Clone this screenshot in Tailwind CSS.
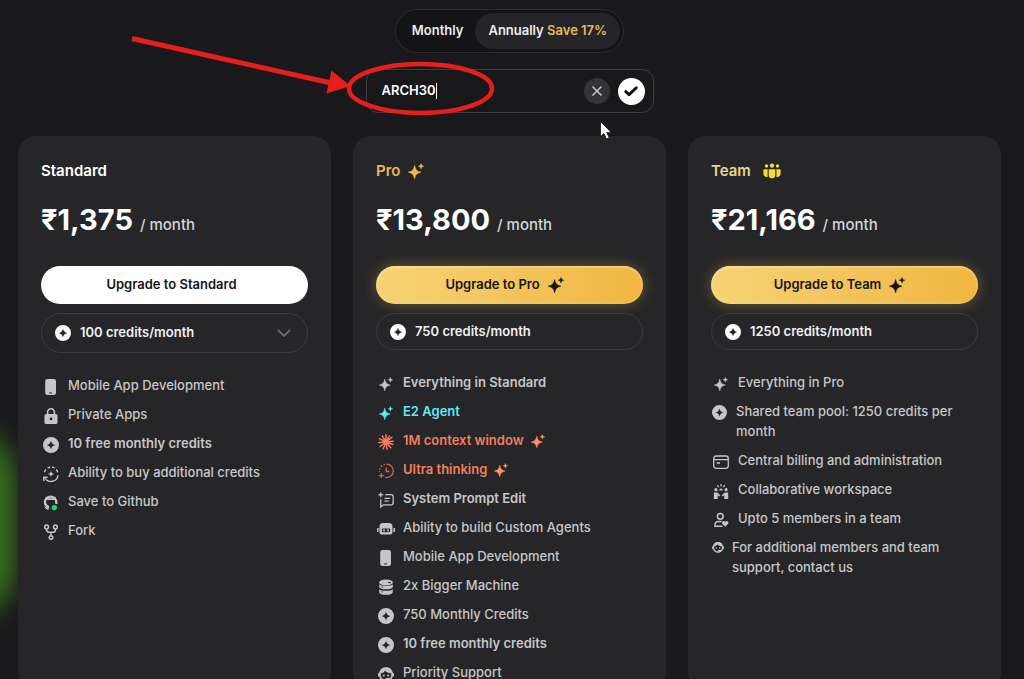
<!DOCTYPE html>
<html lang="en">
<head>
<meta charset="utf-8">
<meta name="viewport" content="width=device-width, initial-scale=1">
<title>Pricing</title>
<script src="https://cdn.jsdelivr.net/npm/@tailwindcss/browser@4"></script>
</head>
<body class="relative min-h-screen overflow-x-hidden bg-[#19191b] font-['Inter',sans-serif] text-white">

<svg class="hidden" aria-hidden="true">
  <symbol id="sparkle" viewBox="0 0 16 16"><path fill="currentColor" stroke="currentColor" stroke-width=".7" stroke-linejoin="round" d="M6.600 2.600C7.600 7 8.600 8.100 12.800 9.200 8.600 10.300 7.600 11.400 6.600 15.600 5.600 11.400 4.600 10.300.4 9.200 4.600 8.100 5.600 7 6.600 2.600Z"/><path fill="currentColor" stroke="currentColor" stroke-width=".5" stroke-linejoin="round" d="M13 .5c.5 1.800.9 2.200 2.700 2.700-1.800.5-2.200.9-2.700 2.700-.5-1.800-.9-2.200-2.700-2.700C12.100 2.700 12.500 2.300 13 .5Z"/></symbol>
  <symbol id="coin" viewBox="0 0 16 16"><path fill="currentColor" fill-rule="evenodd" d="M8 0a8 8 0 1 1 0 16A8 8 0 0 1 8 0Zm0 3.700C7.200 6.400 6.400 7.200 3.700 8 6.400 8.800 7.200 9.600 8 12.300 8.800 9.600 9.600 8.800 12.300 8 9.600 7.200 8.800 6.400 8 3.700Z"/></symbol>
  <symbol id="phone" viewBox="0 0 16 16"><path fill="currentColor" fill-rule="evenodd" d="M4.500 0h6.200a2.300 2.300 0 0 1 2.300 2.300v11.400a2.300 2.300 0 0 1-2.300 2.300H4.500a2.300 2.300 0 0 1-2.300-2.300V2.300A2.300 2.300 0 0 1 4.500 0Zm1.600 13.400v1h3v-1Z"/></symbol>
  <symbol id="lock" viewBox="0 0 16 16"><path fill="none" stroke="currentColor" stroke-width="1.600" d="M4.600 6.500V4.200a3.400 3.400 0 0 1 6.800 0v2.300"/><path fill="currentColor" fill-rule="evenodd" d="M3 6h10a1.500 1.500 0 0 1 1.500 1.500v7A1.500 1.500 0 0 1 13 16H3a1.500 1.500 0 0 1-1.500-1.500v-7A1.500 1.500 0 0 1 3 6Zm5 3.500a1.400 1.400 0 1 0 0 2.800 1.400 1.400 0 0 0 0-2.800Z"/></symbol>
  <symbol id="refill" viewBox="0 0 16 16"><g fill="none" stroke="currentColor" stroke-width="1.400"><path d="M1.400 6.200a7 7 0 0 1 1.500-2.700M4.600 2a7 7 0 0 1 2.500-.8M9 1.100a7 7 0 0 1 2.700.9M13.200 3.500a7 7 0 0 1 1.500 2.700"/><path d="M15 9.200A7 7 0 0 1 2 12"/><path d="M.8 15v-3.800h3.800"/></g><path fill="currentColor" d="M8 4.800c.5 2.200 1 2.700 3.200 3.200C9 8.500 8.500 9 8 11.200 7.500 9 7 8.500 4.800 8 7 7.500 7.500 7 8 4.800Z"/></symbol>
  <symbol id="github" viewBox="0 0 16 16"><path fill="none" stroke="currentColor" stroke-width="2.200" d="M5 13.600V11.800C3.200 11 1.900 9.300 1.900 7.300a5.700 5.700 0 0 1 11.400 0V9"/><path fill="currentColor" d="M3 1.600 5.600 3.200h4L12.200 1.600 13.400 5H1.800ZM1 10.500l1.500 1.600 2.500.600 1 2.300-2.500-.8A7 7 0 0 1 1 10.500Z"/><circle cx="11.300" cy="12.700" r="2.700" fill="#27d565"/></symbol>
  <symbol id="fork" viewBox="0 0 16 16"><g fill="none" stroke="currentColor" stroke-width="1.500"><circle cx="3.600" cy="3" r="1.900"/><circle cx="12.400" cy="3" r="1.900"/><circle cx="8" cy="13.500" r="1.800"/><path d="M3.600 5v1a2.200 2.200 0 0 0 2.200 2.200h4.400A2.200 2.200 0 0 0 12.400 6V5M8 8.200v3.400"/></g></symbol>
  <symbol id="burst" viewBox="0 0 16 16"><path stroke="currentColor" stroke-width="1.500" stroke-linecap="round" d="M8 8V.8M8 8l3.300-6M8 8l6-4.800M8 8l7.200-.7M8 8l6.800 2.500M8 8l4.700 5.700M8 8l1 7.200M8 8l-2.800 6.800M8 8l-6 4.500M8 8l-7.200.6M8 8 1.500 4.700M8 8 4.300 1.800"/></symbol>
  <symbol id="clock" viewBox="0 0 16 16"><g fill="none" stroke="currentColor" stroke-width="1.300"><path d="M8.600 1.200a6.700 6.700 0 0 1 0 13.400"/><path stroke-dasharray="1.500 1.600" d="M7 1.400A6.800 6.800 0 0 0 1.500 9"/><path d="M8.300 4.500v4h3.200M3.300 10v5.200M.7 12.600h5.200M7.200 14.400h2"/></g></symbol>
  <symbol id="prompt" viewBox="0 0 16 16"><path fill="currentColor" stroke="currentColor" stroke-width=".5" d="M2.800.2c.4 1.900.8 2.200 2.600 2.600-1.800.4-2.200.8-2.600 2.600C2.400 3.600 2 3.200.2 2.800 2 2.400 2.400 2.100 2.800.2Z"/><path fill="none" stroke="currentColor" stroke-width="1.300" d="M7.200 2.700h6a2 2 0 0 1 2 2v6.100a2 2 0 0 1-2 2H5.500l-2.700 2.200V7.200M6.500 6.400h5.600M6.500 9.200h4"/></symbol>
  <symbol id="robot" viewBox="0 0 18 16"><path fill="currentColor" fill-rule="evenodd" d="M6 2h6a3.500 3.500 0 0 1 3.500 3.500V11a2.500 2.500 0 0 1-2.500 2.500H5A2.500 2.500 0 0 1 2.500 11V5.500A3.500 3.500 0 0 1 6 2Zm0 5.500a1.200 1.200 0 0 0-1.200 1.200v1.400A1.200 1.200 0 0 0 6 11.300h6a1.200 1.200 0 0 0 1.200-1.200V8.700A1.200 1.200 0 0 0 12 7.500Z"/><path stroke="currentColor" stroke-width="1.500" d="M.8 7v4M17.200 7v4M7 8.300v2.200M11 8.300v2.200"/></symbol>
  <symbol id="stack" viewBox="0 0 16 16"><ellipse cx="8" cy="3.400" rx="6.800" ry="3" fill="currentColor"/><path fill="currentColor" d="M1.200 5.300c1.300 2.200 12.300 2.200 13.600 0v2.400c0 3.500-13.600 3.500-13.600 0Z"/><path fill="currentColor" d="M1.200 10.200c1.300 2.200 12.300 2.200 13.600 0v2.700c0 3.800-13.600 3.800-13.600 0Z"/><path stroke="#262628" stroke-width="1" d="M10 3.600h3M3.500 8.200h1.300M3.500 12.900h1.300"/></symbol>
  <symbol id="support" viewBox="0 0 16 16"><path fill="none" stroke="currentColor" stroke-width="1.600" d="M2 7a6.100 6.100 0 0 1 12 0M13.800 10.600c-.8 2.500-2.900 4.100-5.800 4.100s-5-1.600-5.800-4.100"/><path fill="currentColor" d="M2.800 6.500h-1A1.800 1.800 0 0 0 0 8.300v.9A1.800 1.800 0 0 0 1.800 11h1Zm10.400 0h1A1.800 1.800 0 0 1 16 8.300v.9a1.800 1.800 0 0 1-1.800 1.800h-1ZM2.500 7.200C5 7.100 6.300 6 7 4.400c1.400 1.800 3.500 2.700 6.500 2.800C14 3.500 11.300 1.800 8 1.800S2.300 3.500 2.500 7.200Z"/><circle cx="5.800" cy="9.400" r="1" fill="currentColor"/><circle cx="10.200" cy="9.400" r="1" fill="currentColor"/><path stroke="currentColor" stroke-width="1.700" stroke-linecap="round" d="M8.500 12.800h3.600"/></symbol>
  <symbol id="card" viewBox="0 0 16 16"><rect x=".7" y="2" width="14.600" height="12.300" rx="2.500" fill="none" stroke="currentColor" stroke-width="1.300"/><path stroke="currentColor" stroke-width="1.300" d="M1 5.600h14M3.700 9h3.400"/></symbol>
  <symbol id="collab" viewBox="0 0 16 16"><g fill="currentColor"><circle cx="2.900" cy="6.700" r="1.600"/><circle cx="13.100" cy="6.700" r="1.600"/><path d="M.8 9.500h3.500l3 2.800-1.100 1.200-1.500-1.300V16H.8ZM15.200 9.500h-3.500l-3 2.800 1.100 1.200 1.500-1.300V16h3.900Z"/></g><path fill="none" stroke="currentColor" stroke-width="1.200" d="M8 1v2.500M4.200 2.200l1.500 2M11.800 2.200l-1.500 2M6.500 7.500 8 6l1.500 1.500"/></symbol>
  <symbol id="member" viewBox="0 0 16 16"><g fill="none" stroke="currentColor" stroke-width="1.500"><circle cx="7.300" cy="4.300" r="2.900"/><path d="M8.500 9.600H6c-2.500 0-4 1.300-4 3.100v1.500h7.500"/></g><path fill="currentColor" d="M12.200 14.800 9.400 12c-1.500-1.900.9-4 2.800-2.200 1.900-1.800 4.300.3 2.800 2.200Z"/></symbol>
  <symbol id="people" viewBox="0 0 18 16"><g fill="currentColor"><circle cx="9" cy="2.600" r="2.200"/><circle cx="3.500" cy="3" r="1.700"/><circle cx="14.500" cy="3" r="1.700"/><path d="M5.700 6.300h6.600v5.800a3.300 3.300 0 0 1-6.600 0ZM.4 7.300a1 1 0 0 1 1-1h3.200v7.800C2 14.300.4 12.800.4 10.600ZM17.600 7.300a1 1 0 0 0-1-1h-3.200v7.800c2.600.2 4.200-1.300 4.200-3.500Z"/></g></symbol>
</svg>

<!-- background glow -->
<div class="absolute top-[424px] -left-[104px] h-[200px] w-[120px] rounded-full bg-[#356f1c] blur-[12px]" aria-hidden="true"></div>

<main class="relative pt-[9px] pr-[23px] pl-[18px]">
  <div class="mx-auto flex h-11 w-fit items-center rounded-full border border-[#2c2c2f] bg-[#141416] py-1 pr-[3px] pl-4 text-[13px] font-semibold text-[#ececee]" role="group" aria-label="Billing period">
    <button type="button" class="pr-3">Monthly</button>
    <button type="button" aria-pressed="true" class="h-9 rounded-full bg-[#252529] px-[13px] whitespace-nowrap">Annually <span class="text-[#e9b954]">Save 17%</span></button>
  </div>

  <form class="relative mx-auto mt-4 flex h-11 w-72 items-center rounded-xl border border-[#3e3e41] bg-[#18181a] pr-2 pl-[15px]" onsubmit="return false">
    <input type="text" value="ARCH30" aria-label="Promo code" class="field-sizing-content bg-transparent text-[13px] font-semibold text-white outline-none">
    <span class="h-4 w-px bg-white" aria-hidden="true"></span>
    <button type="button" aria-label="Clear code" class="ml-auto flex size-[26px] items-center justify-center rounded-full bg-[#343436] text-[#c4c4c6]">
      <svg class="size-3" viewBox="0 0 12 12" fill="none" stroke="currentColor" stroke-width="1.500"><path d="m1.500 1.500 9 9M10.500 1.500l-9 9"/></svg>
    </button>
    <button type="submit" aria-label="Apply code" class="ml-2 flex size-[27px] items-center justify-center rounded-full bg-white text-[#111]">
      <svg class="size-4" viewBox="0 0 16 16" fill="none" stroke="currentColor" stroke-width="2.900" stroke-linecap="round" stroke-linejoin="round"><path d="m2.800 8.600 3.300 3 7.200-6.800"/></svg>
    </button>
    <!-- callout arrow, ring and pointer -->
    <svg class="pointer-events-none absolute -top-10 -left-[237px] z-10 h-[112px] w-[490px]" viewBox="0 0 490 112" aria-hidden="true">
      <path d="m2 8.500 199 44.500" stroke="#e61e1e" stroke-width="5"/>
      <path d="m201.500 40.500 19 15.500-24 7.500Z" fill="#e61e1e"/>
      <ellipse cx="290.500" cy="58.500" rx="71.500" ry="24.500" fill="none" stroke="#e61e1e" stroke-width="4.500"/>
      <path d="M470.500 91.500v15l3.400-3 2.600 5.500 2.700-1.300-2.500-5.300h4.500Z" fill="#fff" stroke="#111" stroke-width=".8"/>
    </svg>
  </form>

  <div class="mt-[23px] grid grid-cols-3 gap-[22px]">
    <section class="rounded-[18px] bg-[#262628] px-[23px] pt-[23px] pb-2">
      <h2 class="flex h-6 items-center text-[15px] font-semibold">Standard</h2>
      <p class="mt-[19px] flex h-9 items-baseline gap-[7px] text-[29px] leading-9 font-bold">₹1,375 <span class="text-[15px] font-medium text-[#d5d5d8]">/ month</span></p>
      <button type="button" class="mt-7 flex h-[38px] w-full items-center justify-center rounded-full bg-white pr-1.5 text-[13px] font-semibold text-[#161616]">Upgrade to Standard</button>
      <div class="mt-[9px] flex h-10 items-center rounded-full border border-[#3b3b3d] pr-4 pl-[13px]">
        <svg class="size-4 shrink-0"><use href="#coin"/></svg>
        <select aria-label="Monthly credits" class="min-w-0 flex-1 appearance-none bg-transparent pl-[9px] text-[13px] font-semibold text-[#f0f0f2] outline-none"><option>100 credits/month</option></select>
        <svg class="h-2 w-3.5 shrink-0" viewBox="0 0 14 8" fill="none" stroke="#77777a" stroke-width="1.600"><path d="m.8 .8 6.200 6.200L13.200.8"/></svg>
      </div>
      <ul class="mt-[22px] flex flex-col gap-[9px] pl-0.5 text-[13px] leading-5 font-medium text-[#c6c6c9]">
        <li class="flex gap-[9px]"><svg class="mt-1 size-4 shrink-0"><use href="#phone"/></svg>Mobile App Development</li>
        <li class="flex gap-[9px]"><svg class="mt-1 size-4 shrink-0"><use href="#lock"/></svg>Private Apps</li>
        <li class="flex gap-[9px] font-semibold"><svg class="mt-1 size-4 shrink-0"><use href="#coin"/></svg>10 free monthly credits</li>
        <li class="flex gap-[9px]"><svg class="mt-1 size-4 shrink-0"><use href="#refill"/></svg>Ability to buy additional credits</li>
        <li class="flex gap-[9px]"><svg class="mt-1 size-4 shrink-0"><use href="#github"/></svg>Save to Github</li>
        <li class="flex gap-[9px]"><svg class="mt-1 size-4 shrink-0"><use href="#fork"/></svg>Fork</li>
      </ul>
    </section>

    <section class="rounded-[18px] bg-[#262628] px-[23px] pt-[23px] pb-2">
      <h2 class="flex h-6 items-center gap-2 text-[15px] font-semibold text-[#e9b954]">Pro <svg class="size-4"><use href="#sparkle"/></svg></h2>
      <p class="mt-[19px] flex h-9 items-baseline gap-[7px] text-[29px] leading-9 font-bold">₹13,800 <span class="text-[15px] font-medium text-[#d5d5d8]">/ month</span></p>
      <button type="button" class="mt-7 flex h-[38px] w-full items-center justify-center gap-2 rounded-full bg-linear-to-r from-[#f6d374] to-[#f0b640] pr-2.5 text-[13px] font-semibold text-[#161616] shadow-[0_0_14px_rgba(240,190,70,0.35),inset_0_1px_3px_rgba(255,240,190,0.7)]">Upgrade to Pro <svg class="size-4"><use href="#sparkle"/></svg></button>
      <div class="mt-[9px] flex h-[37px] items-center gap-[9px] rounded-full border border-[#3b3b3d] pl-[13px] text-[13px] font-semibold text-[#f0f0f2]"><svg class="size-4 text-white"><use href="#coin"/></svg>750 credits/month</div>
      <ul class="mt-[22px] flex flex-col gap-[9px] pl-0.5 text-[13px] leading-5 font-medium text-[#c6c6c9]">
        <li class="flex gap-[9px] font-semibold"><svg class="mt-1 size-4 shrink-0 p-px"><use href="#sparkle"/></svg>Everything in Standard</li>
        <li class="flex gap-[9px] font-semibold text-[#5eeaf0]"><svg class="mt-1 size-4 shrink-0 p-px"><use href="#sparkle"/></svg>E2 Agent</li>
        <li class="flex gap-[9px] font-semibold text-[#f47d5d]"><svg class="mt-1 size-4 shrink-0"><use href="#burst"/></svg>1M context window <svg class="-ml-0.5 mt-1 size-3.5 text-[#ff9463]"><use href="#sparkle"/></svg></li>
        <li class="flex gap-[9px] font-semibold text-[#f47d5d]"><svg class="mt-1 size-4 shrink-0 text-[#c9694f]"><use href="#clock"/></svg>Ultra thinking <svg class="-ml-0.5 mt-1 size-3.5 text-[#ff9463]"><use href="#sparkle"/></svg></li>
        <li class="flex gap-[9px] font-semibold"><svg class="mt-1 size-4 shrink-0"><use href="#prompt"/></svg>System Prompt Edit</li>
        <li class="flex gap-2"><svg class="-ml-px mt-1 h-4 w-[18px] shrink-0"><use href="#robot"/></svg>Ability to build Custom Agents</li>
        <li class="flex gap-[9px]"><svg class="mt-1 size-4 shrink-0"><use href="#phone"/></svg>Mobile App Development</li>
        <li class="flex gap-[9px]"><svg class="mt-1 size-4 shrink-0"><use href="#stack"/></svg>2x Bigger Machine</li>
        <li class="flex gap-[9px]"><svg class="mt-1 size-4 shrink-0"><use href="#coin"/></svg>750 Monthly Credits</li>
        <li class="flex gap-[9px] font-semibold"><svg class="mt-1 size-4 shrink-0"><use href="#coin"/></svg>10 free monthly credits</li>
        <li class="flex gap-[9px]"><svg class="mt-1 size-4 shrink-0"><use href="#support"/></svg>Priority Support</li>
      </ul>
    </section>

    <section class="rounded-[18px] bg-[#262628] px-[23px] pt-[23px] pb-2">
      <h2 class="flex h-6 items-center gap-3 text-[15px] font-semibold text-[#e3d88e]">Team <svg class="h-4 w-[18px] text-[#f5db38]"><use href="#people"/></svg></h2>
      <p class="mt-[19px] flex h-9 items-baseline gap-[7px] text-[29px] leading-9 font-bold">₹21,166 <span class="text-[15px] font-medium text-[#d5d5d8]">/ month</span></p>
      <button type="button" class="mt-7 flex h-[38px] w-full items-center justify-center gap-2 rounded-full bg-linear-to-r from-[#f6d374] to-[#f0b640] pr-2.5 text-[13px] font-semibold text-[#161616] shadow-[0_0_14px_rgba(240,190,70,0.35),inset_0_1px_3px_rgba(255,240,190,0.7)]">Upgrade to Team <svg class="size-4"><use href="#sparkle"/></svg></button>
      <div class="mt-[9px] flex h-[37px] items-center gap-[9px] rounded-full border border-[#3b3b3d] pl-[13px] text-[13px] font-semibold text-[#f0f0f2]"><svg class="size-4 text-white"><use href="#coin"/></svg>1250 credits/month</div>
      <ul class="mt-[22px] flex flex-col gap-[9px] pl-0.5 text-[13px] leading-5 font-medium text-[#c6c6c9]">
        <li class="flex gap-[9px]"><svg class="mt-1 size-4 shrink-0 p-px"><use href="#sparkle"/></svg>Everything in Pro</li>
        <li class="flex gap-[9px]"><svg class="-ml-px mt-1 size-[15px] shrink-0"><use href="#coin"/></svg>Shared team pool: 1250 credits per month</li>
        <li class="flex gap-[9px]"><svg class="mt-1 size-4 shrink-0"><use href="#card"/></svg>Central billing and administration</li>
        <li class="flex gap-[9px]"><svg class="mt-1 size-4 shrink-0"><use href="#collab"/></svg>Collaborative workspace</li>
        <li class="flex gap-[9px]"><svg class="mt-1 size-4 shrink-0"><use href="#member"/></svg>Upto 5 members in a team</li>
        <li class="flex gap-2"><svg class="-ml-px mt-1 size-3 shrink-0"><use href="#support"/></svg>For additional members and team support, contact us</li>
      </ul>
    </section>
  </div>
</main>
</body>
</html>
